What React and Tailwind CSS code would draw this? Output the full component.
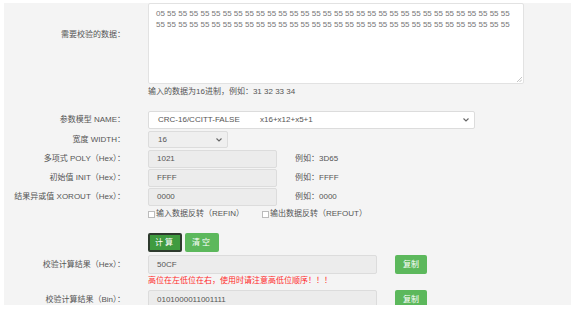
const FONT = { fontFamily: '"Liberation Sans", "Noto Sans CJK SC", sans-serif' };

const data =
  "05 " + Array(63).fill("55").join(" ");

function Label({ children, className = "" }) {
  return (
    <div className={"flex w-[121px] shrink-0 justify-end whitespace-nowrap text-[8px] text-[#555] " + className}>
      {children}
    </div>
  );
}

function Chevron() {
  return (
    <svg width="6" height="4" viewBox="0 0 6 4" className="shrink-0">
      <path d="M0.5 0.5 L3 3 L5.5 0.5" fill="none" stroke="#666" strokeWidth="1.1" />
    </svg>
  );
}

function Field({ label, value, hint }) {
  return (
    <div className="flex items-center gap-[23px]">
      <Label>{label}</Label>
      <div className="flex items-center gap-[18px]">
        <div className="flex h-[18px] w-[129px] items-center rounded-[2px] border border-[#dcdcdc] bg-[#ececec] pl-[8px] text-[8px] text-[#555]">
          {value}
        </div>
        <div className="text-[8px] text-[#555]">例如：{hint}</div>
      </div>
    </div>
  );
}

function ResultRow({ label, value }) {
  return (
    <div className="flex items-center gap-[23px]">
      <Label>{label}</Label>
      <div className="flex items-center gap-[18px]">
        <div className="flex h-[19px] w-[229px] items-center rounded-[2px] border border-[#dcdcdc] bg-[#ececec] pl-[8px] text-[8px] text-[#555]">
          {value}
        </div>
        <div className="flex h-[19px] w-[32px] items-center justify-center rounded-[2px] bg-[#5cb85c] text-[8px] text-white">
          复制
        </div>
      </div>
    </div>
  );
}

export default function App() {
  return (
    <div className="h-[312px] w-[573px] overflow-hidden bg-white pl-[4px] pt-[3px]" style={FONT}>
      <div className="h-[302px] w-[567px] overflow-hidden bg-[#f4f4f4]">
        <div className="flex items-start gap-[23px]">
          <Label className="pt-[26px]">需要校验的数据：</Label>
          <div className="relative h-[81px] w-[376px] rounded-[2px] border border-[#e2e2e2] bg-white px-[7px] pt-[4px] text-[8px] leading-[11px] text-[#777] break-words">
            {data}
            <svg width="5" height="5" viewBox="0 0 5 5" className="absolute bottom-[1px] right-[1px]">
              <path d="M0 5 L5 0 M2.5 5 L5 2.5" stroke="#aaa" strokeWidth="0.7" />
            </svg>
          </div>
        </div>
        <div className="ml-[144px] mt-[2px] text-[8px] text-[#555]">输入的数据为16进制，例如：31 32 33 34</div>

        <div className="mt-[13px] flex items-center gap-[23px]">
          <Label>参数模型 NAME：</Label>
          <div className="flex h-[18px] w-[327px] items-center rounded-[2px] border border-[#dcdcdc] bg-white pl-[9px] pr-[5px] text-[8px] text-[#555]">
            <span className="w-[102px]">CRC-16/CCITT-FALSE</span>
            <span className="flex-1">x16+x12+x5+1</span>
            <Chevron />
          </div>
        </div>

        <div className="mt-[2px] flex items-center gap-[23px]">
          <Label>宽度 WIDTH：</Label>
          <div className="flex h-[17px] w-[80px] items-center rounded-[2px] border border-[#dcdcdc] bg-[#efefef] pl-[9px] pr-[5px] text-[8px] text-[#555]">
            <span className="flex-1">16</span>
            <Chevron />
          </div>
        </div>

        <div className="mt-[2px] flex flex-col gap-[1px]">
          <Field label="多项式 POLY（Hex）：" value="1021" hint="3D65" />
          <Field label="初始值 INIT（Hex）：" value="FFFF" hint="FFFF" />
          <Field label="结果异或值 XOROUT（Hex）：" value="0000" hint="0000" />
        </div>

        <div className="ml-[144px] mt-[2px] flex items-center text-[8px] text-[#555]">
          <span className="mr-[1px] inline-block h-[7px] w-[7px] border border-[#bbb] bg-white" />
          <span className="w-[106px]">输入数据反转（REFIN）</span>
          <span className="mr-[1px] inline-block h-[7px] w-[7px] border border-[#bbb] bg-white" />
          <span>输出数据反转（REFOUT）</span>
        </div>

        <div className="ml-[144px] mt-[13px] flex gap-[3px]">
          <div className="flex h-[19px] w-[34px] items-center justify-center rounded-[2px] border-2 border-[#2d3a2d] bg-[#3f9b3f] text-[8px] tracking-[2px] text-white">
            计算
          </div>
          <div className="flex h-[19px] w-[34px] items-center justify-center rounded-[2px] bg-[#5cb85c] text-[8px] tracking-[2px] text-white">
            清空
          </div>
        </div>

        <div className="mt-[3px]">
          <ResultRow label="校验计算结果（Hex）：" value="50CF" />
        </div>
        <div className="ml-[144px] mt-[1px] text-[8px] text-[#ff2a2a]">高位在左低位在右，使用时请注意高低位顺序！！！</div>

        <div className="mt-[3px]">
          <ResultRow label="校验计算结果（Bin）：" value="0101000011001111" />
        </div>
      </div>
    </div>
  );
}
